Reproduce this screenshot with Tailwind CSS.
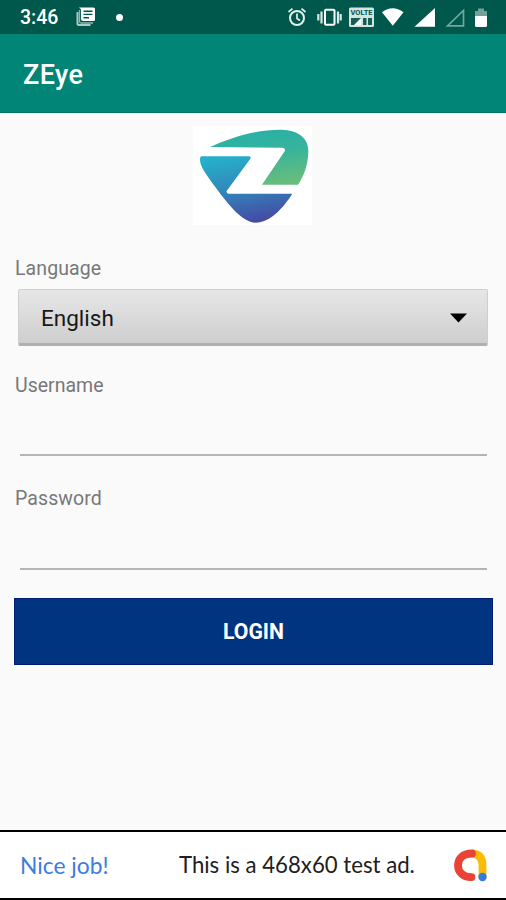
<!DOCTYPE html>
<html lang="en">
<head>
<meta charset="utf-8">
<meta name="viewport" content="width=device-width">
<title>ZEye</title>
<script src="https://cdn.jsdelivr.net/npm/@tailwindcss/browser@4"></script>
</head>
<body class="flex h-[900px] w-[506px] flex-col overflow-hidden bg-[#fafafa] font-[Roboto,sans-serif]">
  <!-- Status bar -->
  <header class="flex h-[34px] shrink-0 items-center bg-[#00574b] pl-5 text-white">
    <span class="w-[56px] pt-[2px] text-[19.500px] leading-[34px] font-medium">3:46</span>
    <svg class="h-[20px] w-[20px]" viewBox="0 0 20 20">
      <path d="M1.500 5V16.500Q1.500 18 3 18H14.500" fill="none" stroke="#a9cbc5" stroke-width="2"/>
      <path d="M3.500 3V14.500Q3.500 16 5 16H17" fill="none" stroke="#8fb8b1" stroke-width="1.300"/>
      <path d="M3 0.500H17.500Q19 0.500 19 2V12.500Q19 14 17.500 14H7Q5 14 5 12V2.500Z" fill="#fff"/>
      <path d="M7.500 4.200H16.500M7.500 7.400H16.500M7.500 10.700H13" stroke="#00574b" stroke-width="1.400"/>
    </svg>
    <span class="ml-[20px] h-[7px] w-[7px] rounded-full bg-white"></span>
    <svg class="ml-auto h-[34px] w-[226px]" viewBox="0 0 226 34">
      <g fill="none" stroke="#e4f1ef" stroke-width="2">
        <circle cx="17" cy="18" r="7"/>
        <path d="M17 13.500V18.500L20 20.500M8.500 12L12.500 8.700M25.500 12L21.500 8.700" stroke-width="1.700"/>
      </g>
      <rect x="45" y="9.800" width="9.500" height="15" rx="1" fill="none" stroke="#fff" stroke-width="2"/>
      <path d="M41.500 11.500V23.500M58 11.500V23.500M38.300 14V20.500M60.700 14V20.500" stroke="#d5e9e5" stroke-width="2.200"/>
      <rect x="69" y="7.500" width="25" height="19.500" rx="1.500" fill="#d2e5e1"/>
      <text x="70.500" y="15" font-size="7.500" font-weight="700" textLength="22" lengthAdjust="spacingAndGlyphs" fill="#00574b">VOLTE</text>
      <path d="M71 18H81V25H71ZM83 18H86.500V25H83ZM88 18H92V25H88Z" fill="#145f54"/>
      <path d="M74 25L81 18V25Z" fill="#fff"/>
      <path d="M102 12.200Q112.500 4.500 123.500 12.200L112.800 25.800Z" fill="#fff"/>
      <path d="M155 8V26.700H134.500Z" fill="#fff"/>
      <path d="M183.500 10.500V25.800H167.500Z" fill="none" stroke="#6ea99b" stroke-width="1.700"/>
      <path d="M195 16V11H198V8.500H204V11H207V16Z" fill="#73a199"/>
      <path d="M195 16H207V25.500Q207 27 205.500 27H196.500Q195 27 195 25.500Z" fill="#fff"/>
    </svg>
  </header>

  <div class="flex h-[79px] shrink-0 items-center border-b border-[#047466] bg-[#008577] pt-[4px] pl-[23px]">
    <h1 class="text-[27px] leading-8 font-medium tracking-[0.4px] text-white">ZEye</h1>
  </div>

  <main class="flex flex-1 flex-col px-[14px] pt-[13px]">
    <div class="ml-[179px] h-[99px] w-[119px] bg-white">
      <svg class="h-[99px] w-[119px]" viewBox="40 48 357 297">
        <defs>
          <linearGradient id="upper" x1="0.300" y1="0" x2="0.600" y2="1">
            <stop offset="0" stop-color="#27b0a8"/><stop offset="0.450" stop-color="#36b39c"/><stop offset="1" stop-color="#66bd7c"/>
          </linearGradient>
          <linearGradient id="lower" x1="0.250" y1="0" x2="0.500" y2="1">
            <stop offset="0" stop-color="#25b1cb"/><stop offset="0.500" stop-color="#3286b8"/><stop offset="1" stop-color="#454ba5"/>
          </linearGradient>
        </defs>
        <path fill="url(#upper)" d="M92 111C150 84 230 58 305 59C357 60 387 85 386 125C385 165 372 200 355 224H247L315 124Q319 114 308 113Z"/>
        <path fill="url(#lower)" d="M66 139H209Q215 140 212 146L141 243Q139 250 147 251H338C310 295 270 338 228 338C185 338 140 275 100 222C75 188 56 160 62 142Q63 139 66 139Z"/>
      </svg>
    </div>

    <label class="mt-[32px] pl-px text-[19.500px] leading-6 tracking-[0.1px] text-[#787878]">Language</label>
    <div class="mx-1 mt-[8px] flex h-[57px] items-center justify-between rounded-[2px] border border-b-[3px] border-[#cecece] border-b-[#b0b0b0] bg-linear-to-b from-[#e7e7e7] to-[#cecece] pr-[20px] pl-[22px]">
      <span class="pt-[3px] text-[22.500px] leading-7 text-[#181818]">English</span>
      <svg class="mt-[3px] h-[10px] w-[17px]" viewBox="0 0 17 10"><path d="M0 0.500H17L8.500 9.500Z" fill="#000"/></svg>
    </div>

    <label class="mt-[28px] pl-px text-[19.500px] leading-6 text-[#787878]">Username</label>
    <input class="mr-[5px] ml-[6px] h-[58px] border-b-2 border-[#b5b5b5] outline-none" type="text">

    <label class="mt-[31px] pl-px text-[19.500px] leading-6 tracking-[0.1px] text-[#787878]">Password</label>
    <input class="mr-[5px] ml-[6px] h-[59px] border-b-[2px] border-[#b5b5b5] outline-none" type="password">

    <button class="mt-[28px] mr-[-1px] h-[67px] border border-[#001f72] bg-[#003380] text-[21.200px] font-bold text-white">LOGIN</button>
  </main>

  <!-- Ad banner -->
  <footer class="flex h-[70px] shrink-0 items-center border-t-2 border-b-2 border-black bg-white pl-[20px] text-[22px]">
    <span class="w-[159px] font-[Lato,sans-serif] text-[22.800px] text-[#3b7de0]">Nice job!</span>
    <span class="w-[274px] font-[Lato,sans-serif] text-[22.200px] text-[#202020]">This is a 468x60 test ad.</span>
    <svg class="h-[34px] w-[35px]" viewBox="0 0 35 34" fill="none">
      <path d="M19 5.500Q29.500 6 29.500 17.500V29" stroke="#fbbc04" stroke-width="7.800"/>
      <path d="M19 5.500C9.500 5.500 5 11 5 17.500C5 24 10.500 29.500 18.500 29.200" stroke="#ea4335" stroke-width="7.800" stroke-linecap="round"/>
      <circle cx="29.500" cy="29" r="4.200" fill="#3478e5"/>
    </svg>
  </footer>
</body>
</html>
